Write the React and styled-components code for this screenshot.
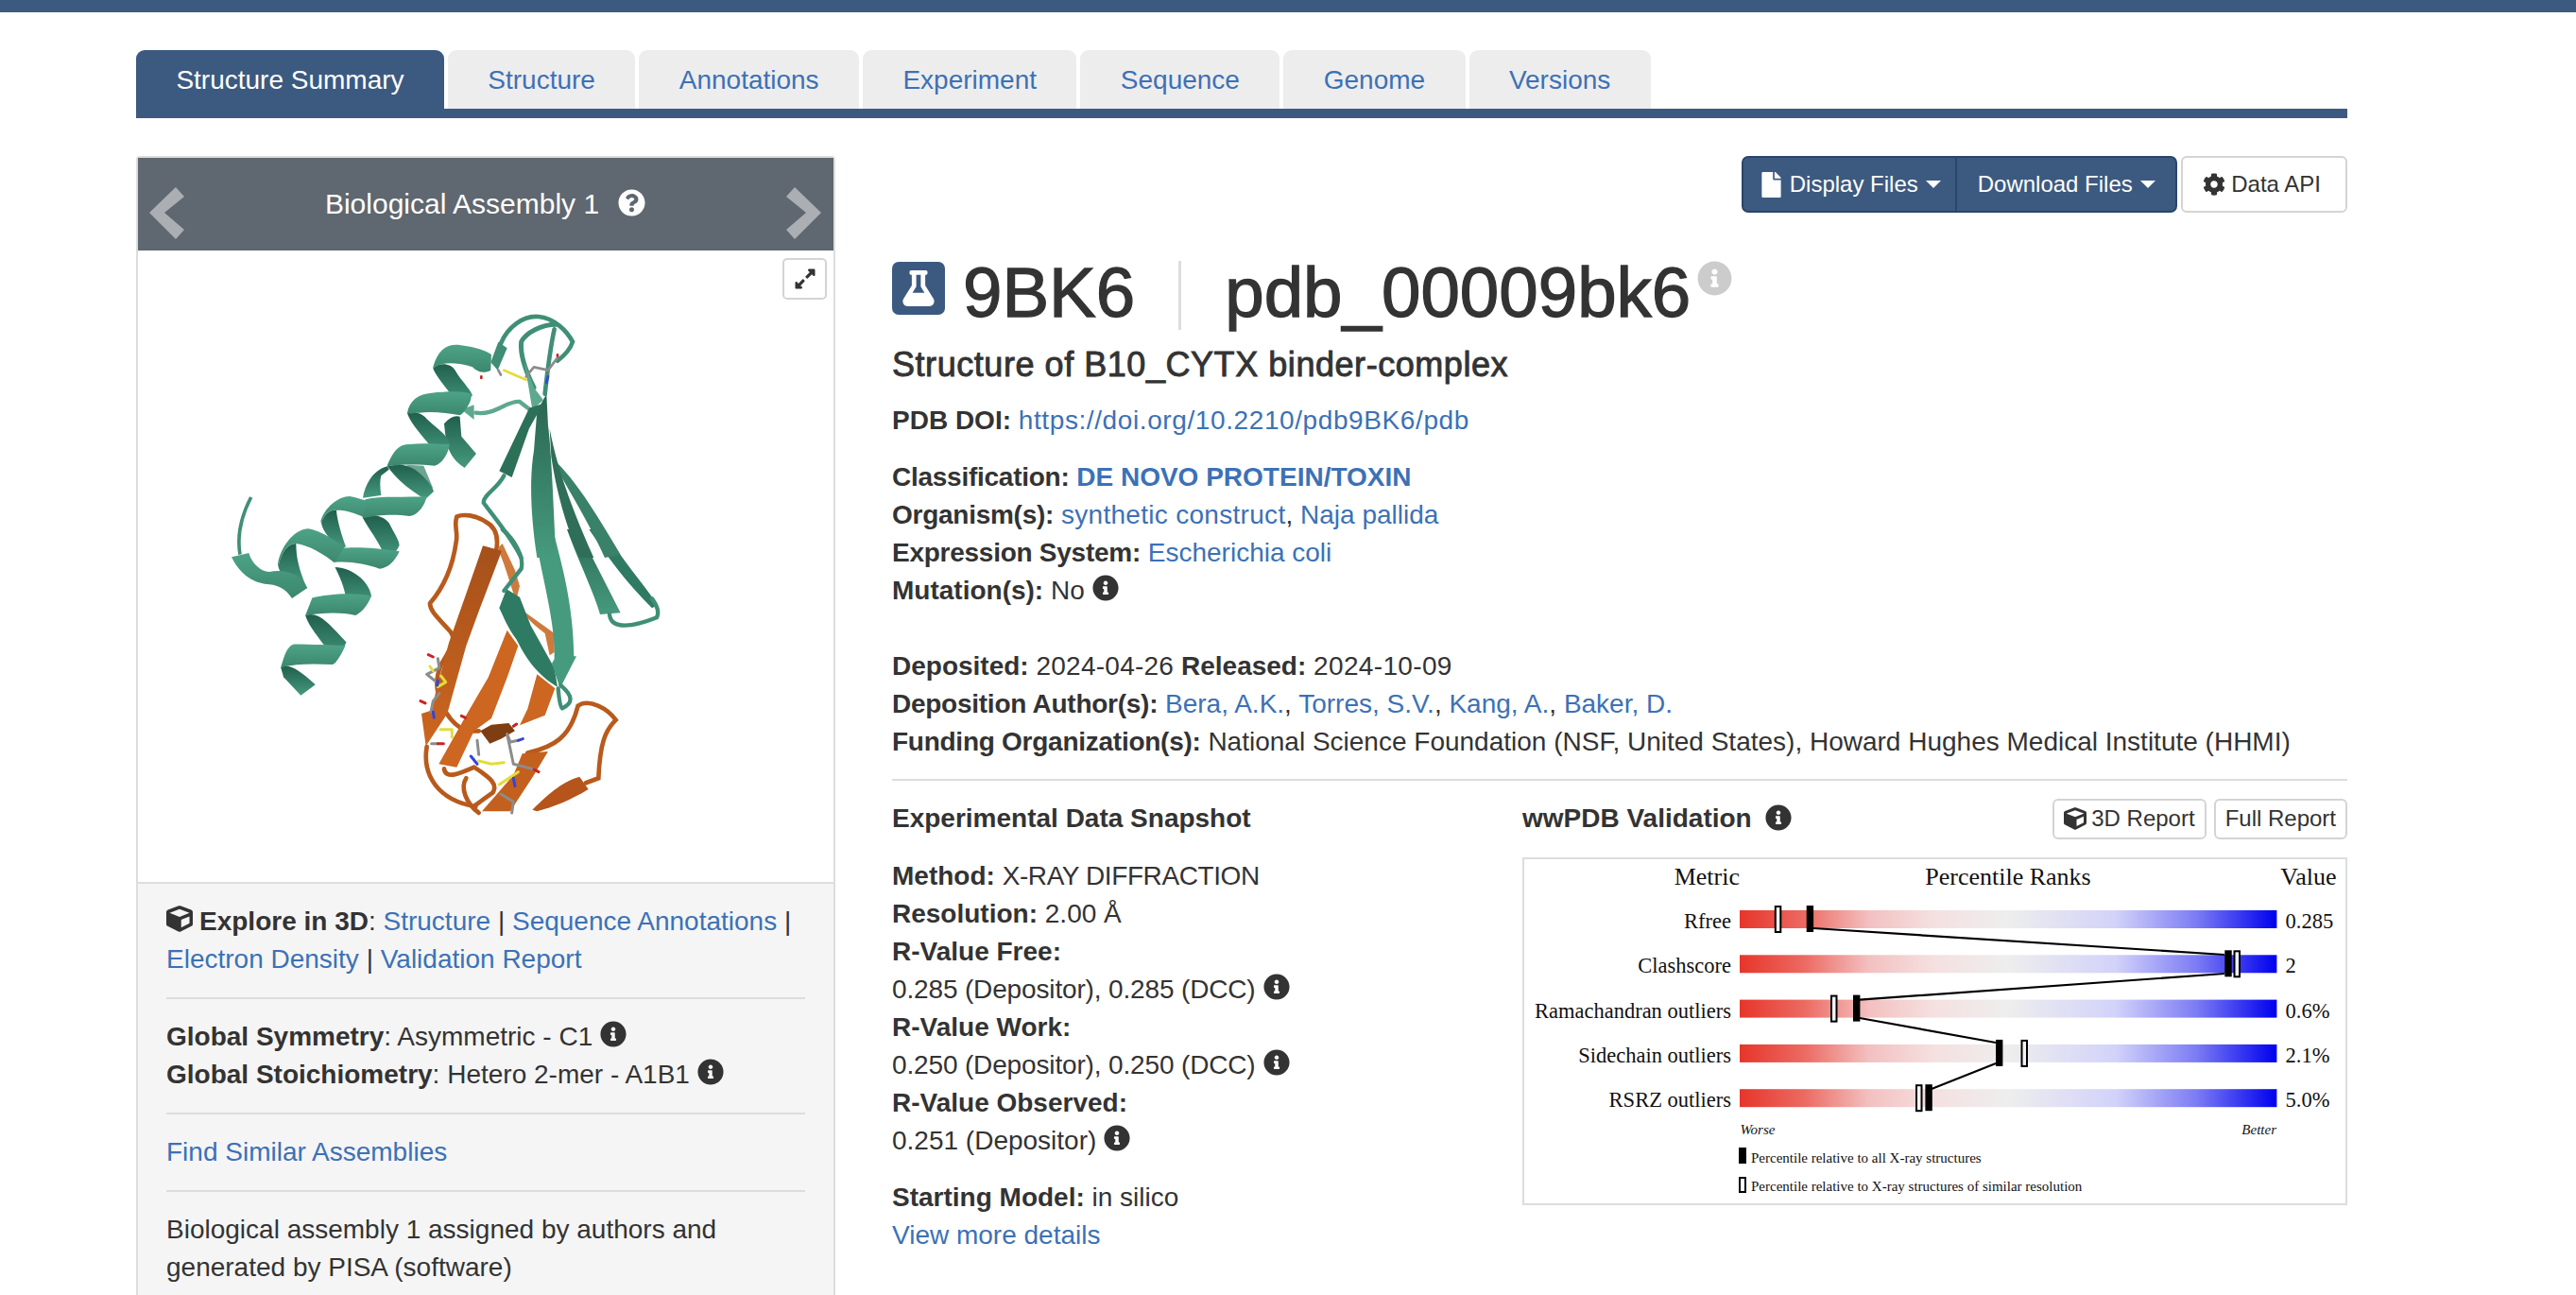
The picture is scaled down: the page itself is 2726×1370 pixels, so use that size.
import React from "react";
import styled, { createGlobalStyle } from "styled-components";
import {
  FaCube,
  FaFlask,
  FaInfoCircle,
  FaQuestionCircle,
  FaCog,
  FaFile,
  FaExpandAlt,
} from "react-icons/fa";

const NAVY = "#3c5a80";
const LINK = "#3c71b6";
const TEXT = "#333333";
const RULE = "#dddddd";

const GlobalStyle = createGlobalStyle`
  html, body {
    margin: 0;
    height: 1370px;
    overflow: hidden;
    background: #fff;
    color: ${TEXT};
    font-family: "Liberation Sans", Arial, sans-serif;
    font-size: 28px;
    line-height: 40px;
  }
  * { box-sizing: border-box; }
`;

const TopBar = styled.div`
  height: 13px;
  background: ${NAVY};
`;

const Page = styled.div`
  width: 2340px;
  margin-left: 144px;
`;

const Tabs = styled.nav`
  display: flex;
  gap: 4px;
  height: 72px;
  margin-top: 40px;
  border-bottom: 10px solid ${NAVY};
`;

const Tab = styled.a`
  height: 62px;
  padding: 2px 42.4px 0;
  display: flex;
  align-items: center;
  border-radius: 9px 9px 0 0;
  background: ${(p) => (p.$active ? NAVY : "#eeedee")};
  color: ${(p) => (p.$active ? "#fff" : LINK)};
`;

const Columns = styled.main`
  display: grid;
  grid-template-columns: 740px 1540px;
  gap: 60px;
  margin-top: 40px;
`;

const Viewer = styled.aside`
  border: 2px solid ${RULE};
  border-bottom: 0;
  border-radius: 4px 4px 0 0;
  height: 1210px;
`;

const ViewerHead = styled.header`
  height: 98px;
  padding: 0 13px 0 12px;
  display: flex;
  align-items: center;
  justify-content: space-between;
  background: #5f6770;
  color: #fff;
  font-size: 30px;
`;

const HeadTitle = styled.span`
  display: flex;
  align-items: center;
  gap: 20px;
  svg { font-size: 29px; margin-top: -3px; }
`;

const Chevron = styled.svg`
  width: 37px;
  height: 55px;
  margin-top: 18px;
  fill: #abafb3;
`;

const Stage = styled.div`
  position: relative;
  height: 668px;
  svg.protein { display: block; }
`;

const ExpandButton = styled.button`
  position: absolute;
  top: 8px;
  right: 7px;
  width: 47px;
  height: 44px;
  padding: 0;
  display: flex;
  align-items: center;
  justify-content: center;
  background: #fff;
  border: 2px solid #d4d4d4;
  border-radius: 5px;
  color: ${TEXT};
  font-size: 24px;
`;

const InfoWell = styled.div`
  height: 442px;
  padding: 20px 30px 0;
  background: #f5f5f5;
  border-top: 2px solid ${RULE};
`;

const WellRule = styled.hr`
  height: 2px;
  margin: 20px 0;
  border: 0;
  background: ${RULE};
`;

const Link = styled.a`
  color: ${LINK};
  letter-spacing: ${(p) => p.$spacing || "normal"};
`;

const Strong = styled.b`
  font-weight: 700;
  letter-spacing: ${(p) => (p.$tight ? "-0.26px" : "normal")};
`;

const BoldLink = styled(Link)`
  font-weight: 700;
`;

const Spaced = styled.span`
  letter-spacing: ${(p) => p.$spacing};
`;

const Icon = styled.span`
  display: inline-flex;
  vertical-align: -2px;
  margin: ${(p) => p.$margin || "0 0 0 8px"};
  font-size: 28px;
  svg { display: block; }
`;

const Summary = styled.section`
  min-width: 0;
`;

const ActionBar = styled.div`
  display: flex;
  justify-content: flex-end;
  gap: 4px;
  height: 60px;
`;

const SplitGroup = styled.div`
  display: flex;
  width: 461px;
  border: 2px solid #2a456a;
  border-radius: 7px;
  background: ${NAVY};
  color: #fff;
  font-size: 24px;
`;

const SplitButton = styled.span`
  flex: ${(p) => (p.$first ? "0 0 224px" : "1")};
  display: flex;
  align-items: center;
  justify-content: center;
  gap: 6px;
  & + & { border-left: 2px solid #2a456a; }
  svg { font-size: 27px; }
`;

const Caret = styled.i`
  width: 0;
  height: 0;
  margin-left: 2px;
  border-left: 8px solid transparent;
  border-right: 8px solid transparent;
  border-top: 8px solid currentColor;
`;

const PlainButton = styled.span`
  display: flex;
  align-items: center;
  gap: ${(p) => p.$gap || "6px"};
  padding: ${(p) => p.$padding || "0 26px 0 21px"};
  height: ${(p) => p.$height || "60px"};
  border: 2px solid #d4d4d4;
  border-radius: 6px;
  background: #fff;
  font-size: 24px;
`;

const TitleRow = styled.h1`
  display: flex;
  align-items: center;
  height: 75px;
  margin: 50px 0 0;
  padding-bottom: 6px;
  font-size: 74.5px;
  font-weight: 400;
  line-height: 75px;
  -webkit-text-stroke: 1.3px ${TEXT};
`;

const FlaskBadge = styled.span`
  width: 56px;
  height: 56px;
  margin: -10px 19px 0 0;
  display: flex;
  align-items: center;
  justify-content: center;
  border-radius: 7px;
  background: ${NAVY};
  color: #fff;
  font-size: 38px;
`;

const TitleDivider = styled.i`
  width: 3px;
  height: 73px;
  margin: 6px 46px 0 46px;
  background: ${RULE};
`;

const TitleInfo = styled.span`
  display: flex;
  align-self: flex-start;
  margin: 1px 0 0 7px;
  color: #cccccc;
  font-size: 37px;
  -webkit-text-stroke: 0;
`;

const Subtitle = styled.h2`
  margin: 16px 0 0;
  font-size: 36px;
  font-weight: 400;
  line-height: 40px;
  letter-spacing: 0.55px;
  -webkit-text-stroke: 0.9px ${TEXT};
`;

const Block = styled.div`
  margin-top: ${(p) => p.$top}px;
  line-height: 42px;
`;

const Line = styled.div`
  height: 40px;
  white-space: nowrap;
`;

const SummaryRule = styled.hr`
  height: 2px;
  margin: 20px 0;
  border: 0;
  background: ${RULE};
`;

const Details = styled.div`
  display: grid;
  grid-template-columns: 667px 873px;
`;

const SectionHead = styled.h3`
  margin: 0;
  font-size: 28px;
  font-weight: 700;
  line-height: 40px;
`;

const ValidationHead = styled.div`
  display: flex;
  align-items: center;
  height: 40px;
  gap: 8px;
`;

const ValidationTitle = styled.span`
  display: flex;
  align-items: center;
  gap: 14px;
  margin-right: auto;
  svg { margin-top: -3px; }
`;

const ChartBox = styled.div`
  width: 873px;
  height: 368px;
  margin-top: 21px;
  border: 2px solid ${RULE};
  svg { display: block; }
  text { font-family: "Liberation Serif", "Times New Roman", serif; fill: #111; }
`;

const rows = [
  { label: "Rfree", value: "0.285", all: 300.7, similar: 266.8 },
  { label: "Clashscore", value: "2", all: 743.3, similar: 752.5 },
  { label: "Ramachandran outliers", value: "0.6%", all: 350, similar: 326 },
  { label: "Sidechain outliers", value: "2.1%", all: 501, similar: 527.5 },
  { label: "RSRZ outliers", value: "5.0%", all: 426.4, similar: 416 },
];

const ROW_TOP = 56;
const ROW_STEP = 47.3;

const PercentileChart = () => (
  <svg width="869" height="364" viewBox="2 2 869 364">
    <defs>
      <linearGradient id="rank" x1="0" x2="1" y1="0" y2="0">
        <stop offset="0" stopColor="#e7352a" />
        <stop offset="0.12" stopColor="#ec6a62" />
        <stop offset="0.24" stopColor="#f3c0c0" />
        <stop offset="0.36" stopColor="#f5e0e0" />
        <stop offset="0.5" stopColor="#eeeeee" />
        <stop offset="0.7" stopColor="#d2d2fa" />
        <stop offset="0.85" stopColor="#7c7cf4" />
        <stop offset="1" stopColor="#0000ee" />
      </linearGradient>
    </defs>
    <text x="230" y="29" fontSize="26" textAnchor="end">Metric</text>
    <text x="514" y="29" fontSize="26" textAnchor="middle">Percentile Ranks</text>
    <text x="861.5" y="29" fontSize="26" textAnchor="end">Value</text>
    {rows.map((row, ind) => {
      const top = ROW_TOP + ind * ROW_STEP;
      return (
        <g key={row.label}>
          <text x="221" y={top + 19} fontSize="22.5" textAnchor="end">{row.label}</text>
          <rect x="230" y={top} width="568.4" height="19" fill="url(#rank)" />
          <text x="807.5" y={top + 19} fontSize="22.5">{row.value}</text>
        </g>
      );
    })}
    <path
      d="M308 75L743 103M743 123L357 150.7M357 170L501 196M501 218L433 245"
      stroke="#000"
      strokeWidth="2.2"
      fill="none"
    />
    {rows.map((row, ind) => {
      const top = ROW_TOP + ind * ROW_STEP;
      return (
        <g key={row.label}>
          <rect x={row.similar + 1} y={top - 4} width="5.5" height="27" fill="#f2f2f2" stroke="#000" strokeWidth="2" />
          <rect x={row.all} y={top - 5} width="7.4" height="28" fill="#000" />
        </g>
      );
    })}
    <text x="230.5" y="293" fontSize="15" fontStyle="italic">Worse</text>
    <text x="798" y="293" fontSize="15" fontStyle="italic" textAnchor="end">Better</text>
    <rect x="229" y="307" width="8" height="17" fill="#000" />
    <text x="242" y="323" fontSize="15">Percentile relative to all X-ray structures</text>
    <rect x="230" y="339" width="6" height="15" fill="#fff" stroke="#000" strokeWidth="2" />
    <text x="242" y="353" fontSize="15">Percentile relative to X-ray structures of similar resolution</text>
  </svg>
);

// ribbon model, each group traced in the coordinates of its own 3x crop
const CROP_B = "translate(430 560) scale(0.3333)";
const CROP_A = "translate(230 320) scale(0.3333)";
const CROP_C = "translate(440 320) scale(0.3333)";
const CROP_TALL = "translate(140 300) scale(0.482 0.408)";

const orangeLoops = [
  "M285,70 C295,20 280,-10 250,-25 C220,-45 180,-50 160,-40 C150,-10 165,10 158,40 C150,100 130,170 75,235 C75,260 100,280 140,325 C160,350 140,380 110,430 C85,490 100,530 125,580 C150,620 180,645 230,640",
  "M65,690 C50,780 100,860 220,880",
  "M120,760 C125,795 170,775 215,755 C270,790 290,810 275,835 L220,875",
  "M190,790 C170,820 190,870 230,900",
  "M385,710 C470,690 520,660 545,560 C580,535 640,570 665,605 C630,640 615,680 610,790 L570,805",
];

const orangeSheets = [
  { d: "M290,60 L305,45 L345,130 L360,180 L345,240 L400,280 L470,330 L470,390 L455,400 L440,330 C400,300 370,270 350,230 C330,180 320,130 290,60Z", fill: "#cf7a3c" },
  { d: "M243,52 L303,68 L230,260 L190,370 L130,585 L62,688 L48,585 L78,575 L135,360 L195,190Z", fill: "url(#sheetOrange)" },
  { d: "M320,320 L355,370 L320,470 L270,600 L215,640 L160,755 L103,745 L190,590 L260,470Z", fill: "#cc6620" },
  { d: "M415,460 L472,505 L440,590 L360,622 L385,570Z", fill: "#cc6620" },
  { d: "M235,640 L270,620 L325,615 L345,640 L300,665 L265,680Z", fill: "#7f3d12" },
  { d: "M240,895 L340,780 L368,712 L450,705 L405,780 L330,895Z", fill: "#c4601e" },
  { d: "M400,890 C460,830 500,800 550,785 L578,825 C520,860 470,880 415,895Z", fill: "#b5541b" },
];

const lowerGreen = [
  { d: "M510,0 L545,0 L680,265 L615,270 C600,210 550,110 510,0Z", fill: "url(#sheetGreen)" },
  { d: "M580,0 L625,0 C680,90 750,170 798,240 L780,250 C700,170 640,90 580,0Z", fill: "#2f7a62" },
  { d: "M295,250 L318,190 L360,215 L395,305 L470,440 L480,500 C430,470 390,430 350,350 C320,310 310,280 295,250Z", fill: "#2f7a62" },
  { d: "M405,0 L465,0 C490,100 530,230 532,403 L540,403 L488,505 L462,425 L470,412 C475,300 430,150 405,0Z", fill: "#469a7e" },
];

const lowerGreenLoops = [
  "M645,270 C650,320 720,310 795,280 C805,260 795,240 780,220",
  "M482,505 C485,540 490,565 495,568 C530,550 530,530 490,495",
  "M305,0 C340,30 375,85 365,125 L310,195",
];

const helixBack = [
  "M720,385 Q745,355 770,362 L775,425 L822,480 L785,525 Q735,495 725,430Z",
  "M685,210 C700,190 740,190 755,215 C775,250 800,270 810,295 L770,330 C740,285 700,245 685,210Z",
  "M603,352 C625,345 650,350 665,370 C690,395 730,420 737,445 C735,470 710,490 700,490 C680,450 620,400 603,352Z",
  "M540,520 C580,510 610,515 640,540 C670,565 685,590 687,600 L660,625 C620,600 575,570 540,520Z",
  "M462,620 C470,570 500,530 540,520 L545,530 L520,550 C515,570 517,590 520,612Z",
  "M460,680 C500,670 530,680 545,700 C560,730 575,750 578,770 C570,790 550,810 535,815 L520,780 C500,740 475,710 460,680Z",
  "M330,700 C340,670 360,655 378,660 C380,690 395,740 408,775 L385,785 C360,750 335,730 330,700Z",
  "M195,830 C205,790 225,765 250,765 C250,810 260,850 282,900 L240,900 C220,880 195,860 192,830Z",
];

const helixFront = [
  "M685,205 C700,150 730,130 770,135 C810,140 850,150 870,165 L868,215 C850,225 830,225 810,205 C780,195 740,190 715,195 C700,198 690,205 685,210Z",
  "M603,350 C610,310 640,290 680,287 C730,282 780,280 805,290 C812,310 785,350 770,358 C730,350 680,345 640,350 C620,350 610,355 603,350Z",
  "M540,515 C560,470 575,450 610,450 C650,445 700,450 737,450 C735,480 710,515 690,518 C650,515 590,512 540,520Z",
  "M462,650 L470,625 C520,612 600,620 665,615 C660,640 640,675 610,678 C560,670 500,675 462,685Z",
  "M328,695 C340,650 385,615 420,615 C440,618 470,630 475,628 L462,680 C440,670 400,655 378,660 C360,655 340,670 330,700Z",
  "M370,820 L395,780 C440,775 510,780 578,790 C565,820 540,845 515,845 C470,830 420,820 370,825Z",
  "M192,830 C200,780 240,720 290,718 C330,725 370,755 405,775 L370,825 C340,800 290,770 250,765 C225,765 205,790 195,830Z",
  "M45,808 L100,795 C110,830 140,855 165,855 C210,845 265,860 286,906 L237,939 C215,905 190,895 150,893 C100,885 65,850 45,808Z",
];

const helixLowerBack = [
  "M445,735 C480,735 520,770 525,810 L510,830 L470,835 C470,800 460,770 445,735Z",
  "M380,860 C410,850 430,880 470,930 L445,985 C430,940 390,900 380,860Z",
  "M326,995 C345,985 365,1000 402,1040 L370,1068 L332,1020Z",
];

const helixLowerFront = [
  "M380,860 L395,815 C430,805 480,800 525,810 C515,840 500,855 490,860 C450,850 415,855 380,860Z",
  "M326,995 C335,960 340,940 355,935 C400,935 430,938 468,938 C460,960 450,980 440,988 C400,985 360,985 326,995Z",
];

const upperLoops = [
  { d: "M270,130 C290,80 340,40 390,45 C440,50 480,90 498,125 C490,150 470,170 450,185", w: 14, c: "#3f8f76" },
  { d: "M445,70 C400,70 350,95 335,125 C330,170 350,220 375,270", w: 15, c: "#3f8f76" },
  { d: "M440,85 C430,130 420,200 410,290", w: 14, c: "#3f8f76" },
  { d: "M190,350 C250,360 290,310 330,315 L362,340", w: 13, c: "#5ea88f" },
  { d: "M280,550 C260,590 215,610 215,635 C240,670 300,740 335,810", w: 13, c: "#3f8f76" },
];

const upperSheets = [
  { d: "M238,190 L262,125 L290,145 L260,215Z", fill: "#3f8d74" },
  { d: "M345,190 L375,270 L405,310 L370,340 Z", fill: "#5ea88f" },
  { d: "M450,510 C520,580 590,700 650,800 L600,810 C560,720 500,620 455,540Z", fill: "#3a8169" },
  { d: "M425,400 C440,480 470,600 565,810 L520,810 C470,690 445,590 430,490Z", fill: "#2f6f5a" },
  { d: "M385,345 L415,290 L420,390 C430,470 435,600 445,810 L385,810 C365,680 360,560 375,470Z", fill: "url(#sheetUpper)" },
  { d: "M265,535 L360,335 L405,320 L360,400 L305,555Z", fill: "#2d7058" },
];

const lowerSticks = [
  { d: "M100,410 L105,440 L65,460 L90,480 M105,520 L85,545 L78,580 M80,680 L100,680 M320,650 L330,675 L355,670 M225,670 L230,715 M320,650 L340,745 L380,755 L405,762 M300,840 L340,865 L335,900", c: "#8c8c8c" },
  { d: "M70,398 L85,405 M45,545 L60,552 M175,592 L188,598 M340,625 L350,618 M100,680 L118,680 M405,762 L420,770", c: "#cc2222" },
  { d: "M75,435 L85,450 M110,465 L125,485 L100,500 M108,635 L145,635 L145,660 M230,735 L270,745 L310,740 M355,770 L295,810", c: "#e4dc3a" },
  { d: "M100,480 L98,495 M85,580 L88,598 M355,670 L370,665 M340,790 L345,815 M205,720 L225,745", c: "#3344dd" },
];

const upperSticks = [
  { d: "M262,215 L270,230 M350,235 L375,205 L420,215 L450,175", c: "#8c8c8c" },
  { d: "M280,215 L350,245", c: "#e4dc3a" },
  { d: "M208,235 L208,240 M450,166 L450,170", c: "#cc2222" },
  { d: "M420,235 L415,255", c: "#3344dd" },
];

const Shades = ({ id, from, to }) => (
  <linearGradient id={id} x1="0" x2="0" y1="0" y2="1">
    <stop offset="0" stopColor={from} />
    <stop offset="1" stopColor={to} />
  </linearGradient>
);

const Protein = () => (
  <svg className="protein" width="736" height="668" viewBox="146 265 736 668" fill="none">
    <defs>
      <Shades id="helixBack" from="#205f4d" to="#469a7e" />
      <Shades id="helixFront" from="#4ea387" to="#3b876e" />
      <Shades id="sheetOrange" from="#a5501a" to="#cc6620" />
      <Shades id="sheetGreen" from="#2b6b56" to="#469a7e" />
      <Shades id="sheetUpper" from="#296552" to="#469a7e" />
    </defs>

    <g transform={CROP_B}>
      {orangeLoops.map((d) => (
        <path key={d} d={d} stroke="#b85a1c" strokeWidth="14" strokeLinecap="round" />
      ))}
      {orangeSheets.map((sheet) => (
        <path key={sheet.d} d={sheet.d} fill={sheet.fill} />
      ))}
      {lowerGreen.map((sheet) => (
        <path key={sheet.d} d={sheet.d} fill={sheet.fill} />
      ))}
      {lowerGreenLoops.map((d) => (
        <path key={d} d={d} stroke="#3f8f76" strokeWidth="13" strokeLinecap="round" />
      ))}
      {lowerSticks.map((stick) => (
        <path key={stick.d} d={stick.d} stroke={stick.c} strokeWidth="9" strokeLinecap="round" strokeLinejoin="round" />
      ))}
    </g>

    <g transform={CROP_TALL}>
      {helixLowerBack.map((d) => (
        <path key={d} d={d} fill="url(#helixBack)" />
      ))}
      {helixLowerFront.map((d) => (
        <path key={d} d={d} fill="url(#helixFront)" />
      ))}
    </g>

    <g transform={CROP_A}>
      <path d="M107,618 C80,670 60,730 72,800" stroke="#3f8f76" strokeWidth="11" />
      <path d="M600,515 L655,518 L685,590Z" fill="#6aa592" />
      <path d="M775,340 L815,325 L815,372Z" fill="#5ea88f" />
      {helixBack.map((d) => (
        <path key={d} d={d} fill="url(#helixBack)" />
      ))}
      {helixFront.map((d) => (
        <path key={d} d={d} fill="url(#helixFront)" />
      ))}
    </g>

    <g transform={CROP_C}>
      {upperLoops.map((loop) => (
        <path key={loop.d} d={loop.d} stroke={loop.c} strokeWidth={loop.w} strokeLinecap="round" />
      ))}
      {upperSheets.map((sheet) => (
        <path key={sheet.d} d={sheet.d} fill={sheet.fill} />
      ))}
      {upperSticks.map((stick) => (
        <path key={stick.d} d={stick.d} stroke={stick.c} strokeWidth="8" strokeLinecap="round" strokeLinejoin="round" />
      ))}
    </g>
  </svg>
);

const App = () => (
  <>
    <GlobalStyle />
    <TopBar />
    <Page>
      <Tabs>
        <Tab $active>Structure Summary</Tab>
        <Tab>Structure</Tab>
        <Tab>Annotations</Tab>
        <Tab>Experiment</Tab>
        <Tab>Sequence</Tab>
        <Tab>Genome</Tab>
        <Tab>Versions</Tab>
      </Tabs>

      <Columns>
        <Viewer>
          <ViewerHead>
            <Chevron viewBox="0 0 37 55"><path d="M28 0L37 10L16 27L37 45L28 55L0 27Z" /></Chevron>
            <HeadTitle>Biological Assembly 1 <FaQuestionCircle /></HeadTitle>
            <Chevron viewBox="0 0 37 55"><path d="M9 0L0 10L21 27L0 45L9 55L37 27Z" /></Chevron>
          </ViewerHead>
          <Stage>
            <ExpandButton><FaExpandAlt /></ExpandButton>
            <Protein />
          </Stage>
          <InfoWell>
            <div>
              <Icon $margin="0 7px 0 0"><FaCube /></Icon>
              <Strong>Explore in 3D</Strong>: <Link>Structure</Link> | <Link>Sequence Annotations</Link> | <Link>Electron Density</Link> | <Link>Validation Report</Link>
            </div>
            <WellRule />
            <Line><Strong>Global Symmetry</Strong>: Asymmetric - C1<Icon><FaInfoCircle /></Icon></Line>
            <Line><Strong>Global Stoichiometry</Strong>: Hetero 2-mer - A1B1<Icon><FaInfoCircle /></Icon></Line>
            <WellRule />
            <Line><Link>Find Similar Assemblies</Link></Line>
            <WellRule />
            <div>Biological assembly 1 assigned by authors and generated by PISA (software)</div>
          </InfoWell>
        </Viewer>

        <Summary>
          <ActionBar>
            <SplitGroup>
              <SplitButton $first><FaFile />Display Files<Caret /></SplitButton>
              <SplitButton>Download Files<Caret /></SplitButton>
            </SplitGroup>
            <PlainButton><FaCog />Data API</PlainButton>
          </ActionBar>

          <TitleRow>
            <FlaskBadge><FaFlask /></FlaskBadge>
            9BK6
            <TitleDivider />
            pdb_00009bk6
            <TitleInfo><FaInfoCircle /></TitleInfo>
          </TitleRow>
          <Subtitle>Structure of B10_CYTX binder-complex</Subtitle>

          <Block $top={18}>
            <Line><Strong>PDB DOI:</Strong> <Link $spacing="0.6px">https://doi.org/10.2210/pdb9BK6/pdb</Link></Line>
          </Block>

          <Block $top={20}>
            <Line><Strong $tight>Classification:</Strong> <BoldLink>DE NOVO PROTEIN/TOXIN</BoldLink></Line>
            <Line><Strong $tight>Organism(s):</Strong> <Link $spacing="0.3px">synthetic construct</Link>, <Link>Naja pallida</Link></Line>
            <Line><Strong $tight>Expression System:</Strong> <Link>Escherichia coli</Link></Line>
            <Line><Strong>Mutation(s):</Strong> No<Icon><FaInfoCircle /></Icon></Line>
          </Block>

          <Block $top={40}>
            <Line>
              <Strong>Deposited:</Strong> <Spaced $spacing="0.25px">2024-04-26</Spaced> <Strong>Released:</Strong> <Spaced $spacing="0.35px">2024-10-09</Spaced>
            </Line>
            <Line>
              <Strong $tight>Deposition Author(s):</Strong> <Link>Bera, A.K.</Link>, <Link>Torres, S.V.</Link>, <Link>Kang, A.</Link>, <Link>Baker, D.</Link>
            </Line>
            <Line><Strong $tight>Funding Organization(s):</Strong> National Science Foundation (NSF, United States), Howard Hughes Medical Institute (HHMI)</Line>
          </Block>

          <SummaryRule />

          <Details>
            <div>
              <SectionHead>Experimental Data Snapshot</SectionHead>
              <Block $top={20}>
                <Line><Strong>Method:</Strong> <Spaced $spacing="-0.4px">X-RAY DIFFRACTION</Spaced></Line>
                <Line><Strong>Resolution:</Strong> 2.00 Å</Line>
                <Line><Strong>R-Value Free:</Strong></Line>
                <Line><Spaced $spacing="-0.15px">0.285 (Depositor), 0.285 (DCC)</Spaced><Icon><FaInfoCircle /></Icon></Line>
                <Line><Strong>R-Value Work:</Strong></Line>
                <Line><Spaced $spacing="-0.15px">0.250 (Depositor), 0.250 (DCC)</Spaced><Icon><FaInfoCircle /></Icon></Line>
                <Line><Strong>R-Value Observed:</Strong></Line>
                <Line>0.251 (Depositor)<Icon><FaInfoCircle /></Icon></Line>
              </Block>
              <Block $top={20}>
                <Line><Strong>Starting Model:</Strong> in silico</Line>
                <Line><Link>View more details</Link></Line>
              </Block>
            </div>
            <div>
              <ValidationHead>
                <ValidationTitle>
                  <SectionHead>wwPDB Validation</SectionHead>
                  <FaInfoCircle />
                </ValidationTitle>
                <PlainButton $height="43px" $padding="0 10px 0 10px" $gap="5px"><FaCube />3D Report</PlainButton>
                <PlainButton $height="43px" $padding="0 10px">Full Report</PlainButton>
              </ValidationHead>
              <ChartBox><PercentileChart /></ChartBox>
            </div>
          </Details>
        </Summary>
      </Columns>
    </Page>
  </>
);

export default App;
